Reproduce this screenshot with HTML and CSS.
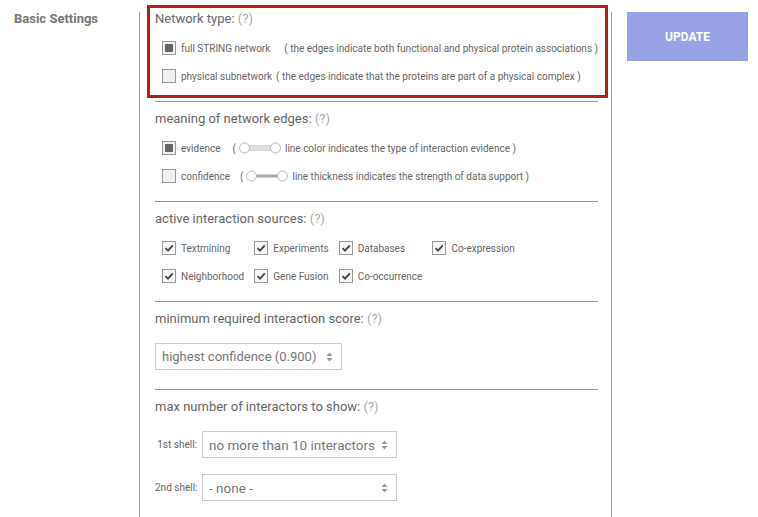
FILE: index.html
```html
<!DOCTYPE html>
<html lang="en">
<head>
    <meta charset="UTF-8">
    <meta name="viewport" content="width=device-width, initial-scale=1.0">
    <title>Basic Settings</title>
    <link rel="stylesheet" href="styles.css">
</head>
<body>
    <div class="page">
        <div class="side">
            <div class="side-title">Basic Settings</div>
        </div>

        <div class="settings">
            <!-- Network type (highlighted) -->
            <div class="highlight">
                <div class="title">Network type: <span class="help">(?)</span></div>
                <div class="rows">
                    <div class="opt">
                        <span class="box radio on"></span>
                        <span class="lbl">full STRING network</span>
                        <span class="note wide">( the edges indicate both functional and physical protein associations )</span>
                    </div>
                    <div class="opt">
                        <span class="box radio"></span>
                        <span class="lbl">physical subnetwork</span>
                        <span class="note">( the edges indicate that the proteins are part of a physical complex )</span>
                    </div>
                </div>
            </div>

            <!-- Edge meaning -->
            <div class="section">
                <div class="title">meaning of network edges: <span class="help">(?)</span></div>
                <div class="rows">
                    <div class="opt">
                        <span class="box radio on"></span>
                        <span class="lbl">evidence</span>
                        <span class="note edge">(
                            <svg class="edge-icon" width="42" height="12" viewBox="0 0 42 12">
                                <line x1="9" y1="4" x2="33" y2="4" stroke="#bbb" stroke-width="1"/>
                                <line x1="9" y1="6" x2="33" y2="6" stroke="#bbb" stroke-width="1"/>
                                <line x1="9" y1="8" x2="33" y2="8" stroke="#bbb" stroke-width="1"/>
                                <circle cx="5.5" cy="6" r="5" fill="#fff" stroke="#bbb" stroke-width="1"/>
                                <circle cx="36.5" cy="6" r="5" fill="#fff" stroke="#bbb" stroke-width="1"/>
                            </svg>
                            line color indicates the type of interaction evidence )</span>
                    </div>
                    <div class="opt">
                        <span class="box radio"></span>
                        <span class="lbl">confidence</span>
                        <span class="note edge short">(
                            <svg class="edge-icon" width="42" height="12" viewBox="0 0 42 12">
                                <line x1="9" y1="6" x2="33" y2="6" stroke="#aaa" stroke-width="3"/>
                                <circle cx="5.5" cy="6" r="5" fill="#fff" stroke="#bbb" stroke-width="1"/>
                                <circle cx="36.5" cy="6" r="5" fill="#fff" stroke="#bbb" stroke-width="1"/>
                            </svg>
                            line thickness indicates the strength of data support )</span>
                    </div>
                </div>
            </div>

            <!-- Sources -->
            <div class="section">
                <div class="title">active interaction sources: <span class="help">(?)</span></div>
                <div class="sources">
                    <div class="opt"><span class="box check"><svg width="12" height="12" viewBox="0 0 12 12"><path d="M2.5 6.2 L5 8.6 L9.8 3.4" fill="none" stroke="#444" stroke-width="1.8"/></svg></span><span class="lbl">Textmining</span></div>
                    <div class="opt"><span class="box check"><svg width="12" height="12" viewBox="0 0 12 12"><path d="M2.5 6.2 L5 8.6 L9.8 3.4" fill="none" stroke="#444" stroke-width="1.8"/></svg></span><span class="lbl">Experiments</span></div>
                    <div class="opt"><span class="box check"><svg width="12" height="12" viewBox="0 0 12 12"><path d="M2.5 6.2 L5 8.6 L9.8 3.4" fill="none" stroke="#444" stroke-width="1.8"/></svg></span><span class="lbl">Databases</span></div>
                    <div class="opt"><span class="box check"><svg width="12" height="12" viewBox="0 0 12 12"><path d="M2.5 6.2 L5 8.6 L9.8 3.4" fill="none" stroke="#444" stroke-width="1.8"/></svg></span><span class="lbl">Co-expression</span></div>
                    <div class="opt"><span class="box check"><svg width="12" height="12" viewBox="0 0 12 12"><path d="M2.5 6.2 L5 8.6 L9.8 3.4" fill="none" stroke="#444" stroke-width="1.8"/></svg></span><span class="lbl">Neighborhood</span></div>
                    <div class="opt"><span class="box check"><svg width="12" height="12" viewBox="0 0 12 12"><path d="M2.5 6.2 L5 8.6 L9.8 3.4" fill="none" stroke="#444" stroke-width="1.8"/></svg></span><span class="lbl">Gene Fusion</span></div>
                    <div class="opt"><span class="box check"><svg width="12" height="12" viewBox="0 0 12 12"><path d="M2.5 6.2 L5 8.6 L9.8 3.4" fill="none" stroke="#444" stroke-width="1.8"/></svg></span><span class="lbl">Co-occurrence</span></div>
                </div>
            </div>

            <!-- Score -->
            <div class="section score">
                <div class="title">minimum required interaction score: <span class="help">(?)</span></div>
                <div class="select score-select">
                    <span>highest confidence (0.900)</span>
                    <svg class="arrows" width="7" height="10" viewBox="0 0 7 10"><path d="M3.5 0.5 L6.5 4 L0.5 4 Z M3.5 9.5 L6.5 6 L0.5 6 Z" fill="#999"/></svg>
                </div>
            </div>

            <!-- Interactors -->
            <div class="section last">
                <div class="title">max number of interactors to show: <span class="help">(?)</span></div>
                <div class="shells">
                    <div class="shell">
                        <span class="shell-lbl">1st shell:</span>
                        <div class="select shell-select">
                            <span>no more than 10 interactors</span>
                            <svg class="arrows" width="7" height="10" viewBox="0 0 7 10"><path d="M3.5 0.5 L6.5 4 L0.5 4 Z M3.5 9.5 L6.5 6 L0.5 6 Z" fill="#999"/></svg>
                        </div>
                    </div>
                    <div class="shell">
                        <span class="shell-lbl">2nd shell:</span>
                        <div class="select shell-select">
                            <span>- none -</span>
                            <svg class="arrows" width="7" height="10" viewBox="0 0 7 10"><path d="M3.5 0.5 L6.5 4 L0.5 4 Z M3.5 9.5 L6.5 6 L0.5 6 Z" fill="#999"/></svg>
                        </div>
                    </div>
                </div>
            </div>
        </div>

        <div class="actions">
            <button class="update">UPDATE</button>
        </div>
    </div>
</body>
</html>
```

FILE: styles.css
```css
/* Page layout */
body {
    margin: 0;
    background: #fff;
    font-family: Roboto, "Liberation Sans", sans-serif;
    color: #666;
}

.page {
    display: flex;
    align-items: flex-start;
    padding-top: 12px;
}

.side {
    width: 139px;
    padding-left: 14px;
    box-sizing: border-box;
    flex-shrink: 0;
}

.side-title {
    font-size: 13px;
    font-weight: bold;
    line-height: 14px;
    color: #777;
}

/* Middle column */
.settings {
    width: 473px;
    box-sizing: border-box;
    border-left: 1px solid #999;
    border-right: 1px solid #999;
    padding: 0 13px 30px 15px;
    min-height: 520px;
}

.title {
    font-size: 13px;
    line-height: 16px;
    color: #666;
}

.help {
    color: #aaa;
}

/* Network type highlight box */
.highlight {
    border: 3px solid #b3201a;
    margin: -7px -10px 3px -8px;
    padding: 3px 0 9px 5px;
}

.section {
    border-top: 1px solid #999;
    padding: 9px 0 15px 0;
}

.section.score {
    padding-bottom: 19px;
}

.section.last {
    padding-bottom: 0;
}

.rows {
    margin-top: 11px;
    padding-left: 7px;
    display: flex;
    flex-direction: column;
    gap: 8px;
}

.opt {
    display: flex;
    align-items: center;
    height: 20px;
    font-size: 10px;
    color: #666;
    white-space: nowrap;
}

.lbl {
    margin-left: 5px;
}

.note {
    margin-left: 4px;
}

.note.wide {
    margin-left: 14px;
}

.note.edge {
    margin-left: 12px;
    display: flex;
    align-items: center;
}

.note.edge.short {
    margin-left: 10px;
}

.edge-icon {
    margin: 0 4px 0 3px;
}

/* Checkbox look */
.box {
    width: 12px;
    height: 12px;
    border: 1px solid #9a9a9a;
    background: #f1f1f1;
    display: flex;
    align-items: center;
    justify-content: center;
    flex-shrink: 0;
}

.box.radio.on::after {
    content: "";
    width: 8px;
    height: 8px;
    background: #666;
}

.box.check {
    background: #f6f6f6;
}

.sources {
    margin-top: 11px;
    padding-left: 7px;
    display: grid;
    grid-template-columns: auto auto auto auto;
    justify-content: start;
    column-gap: 10px;
    row-gap: 8px;
}

/* Select boxes */
.select {
    display: flex;
    align-items: center;
    justify-content: space-between;
    box-sizing: border-box;
    height: 27px;
    border: 1px solid #ccc;
    padding: 0 8px 0 6px;
    font-size: 13px;
    color: #777;
    background: #fff;
    white-space: nowrap;
}

.score-select {
    width: 187px;
    margin-top: 16px;
}

.shells {
    margin-top: 16px;
    display: flex;
    flex-direction: column;
    gap: 16px;
}

.shell {
    display: flex;
    align-items: center;
}

.shell-lbl {
    width: 42px;
    text-align: right;
    font-size: 10px;
    color: #666;
    margin-right: 5px;
    white-space: nowrap;
}

.shell-select {
    width: 195px;
    font-size: 13.5px;
}

/* Right column */
.actions {
    padding-left: 15px;
}

.update {
    width: 121px;
    height: 49px;
    border: none;
    background: #98a2e5;
    color: #fff;
    font-family: Roboto, "Liberation Sans", sans-serif;
    font-weight: bold;
    font-size: 12px;
    cursor: pointer;
}
```
